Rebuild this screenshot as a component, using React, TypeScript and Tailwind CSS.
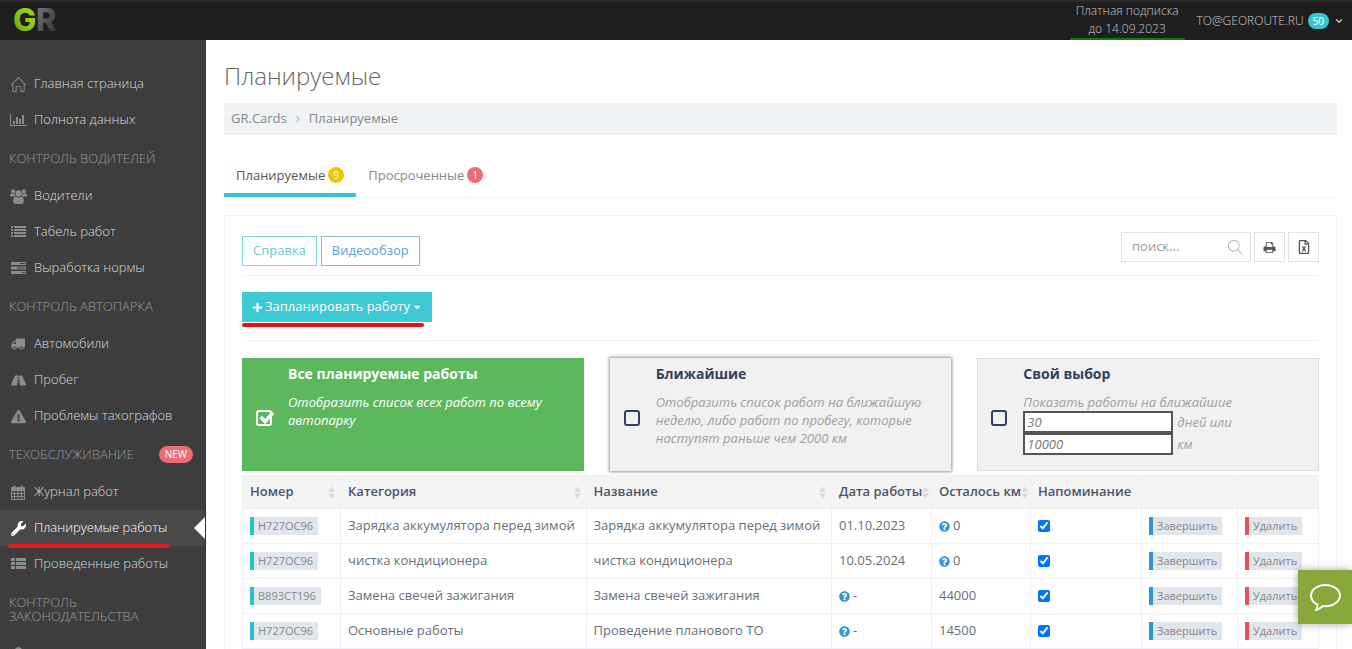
import type { ReactNode } from "react";
import {
  FaCaretDown,
  FaExclamationTriangle,
  FaPlus,
  FaQuestionCircle,
  FaRegFileExcel,
  FaRoad,
  FaTruck,
  FaUser,
  FaWrench,
} from "react-icons/fa";
import { FiChevronDown } from "react-icons/fi";
import { SlBubble, SlHome, SlMagnifier } from "react-icons/sl";

function BarChartIcon() {
  return (
    <svg viewBox="0 0 17 14" className="h-[14px] w-[17px] shrink-0" fill="currentColor">
      <path d="M0 1h1v11h16v1H0z" />
      <path d="M3 8h2v3H3zM6 4h2v7H6zM9 6h2v5H9zM12 2h2v9h-2z" />
    </svg>
  );
}

function UsersIcon() {
  return (
    <svg viewBox="0 0 16 14" className="h-[15px] w-[17px] shrink-0" fill="currentColor">
      <circle cx="3" cy="2.200" r="2" />
      <circle cx="13" cy="2.200" r="2" />
      <circle cx="8" cy="4" r="3" />
      <path d="M0 6.200C0 4.800.8 4.200 1.600 4.200c.9.6 1.900.6 2.800.1 0 1 .3 1.900.9 2.700H1.500C.6 7 0 6.800 0 6.200zM16 6.200c0-1.400-.8-2-1.600-2-.9.6-1.900.6-2.800.1 0 1-.3 1.900-.9 2.700h3.800c.9 0 1.500-.2 1.500-.8z" />
      <path d="M3 11.500C3 9 3.800 7 5.600 7c1.500 1.200 3.300 1.200 4.800 0C12.200 7 13 9 13 11.500c0 1.500-.9 2.500-2.300 2.500H5.300C3.900 14 3 13 3 11.500z" />
    </svg>
  );
}

function ListIcon() {
  return (
    <svg viewBox="0 0 15 12" className="h-[12px] w-[15px] shrink-0" fill="currentColor">
      <path d="M0 0h2v2H0zM3 0h12v2H3zM0 3h2v2H0zM3 3h12v2H3zM0 6h2v2H0zM3 6h12v2H3zM0 9h2v2H0zM3 9h12v2H3z" />
    </svg>
  );
}

function ThListIcon() {
  return (
    <svg viewBox="0 0 15 12" className="h-[12px] w-[15px] shrink-0" fill="currentColor">
      <path d="M0 0h4v3H0zM5 0h10v3H5zM0 4h4v3H0zM5 4h10v3H5zM0 8h4v3H0zM5 8h10v3H5z" />
    </svg>
  );
}

function TasksIcon() {
  return (
    <svg viewBox="0 0 15 14" className="h-[14px] w-[15px] shrink-0" fill="currentColor">
      <path
        fillRule="evenodd"
        d="M0 1h15v3H0zM9 2v1h5V2zM0 5.500h15v3H0zM6 6.500v1h8v-1zM0 10h15v3H0zM11 11v1h3v-1z"
      />
    </svg>
  );
}

function CalendarIcon() {
  return (
    <svg viewBox="0 0 14 15" className="h-[15px] w-[14px] shrink-0" fill="currentColor">
      <path
        fillRule="evenodd"
        d="M1 2h1.500V.5h2V2h5V.5h2V2H13a1 1 0 0 1 1 1v11a1 1 0 0 1-1 1H1a1 1 0 0 1-1-1V3a1 1 0 0 1 1-1zM1 6v2h2V6zM4 6v2h2.500V6zM7.500 6v2H10V6zM11 6v2h2V6zM1 9v2h2V9zM4 9v2h2.500V9zM7.500 9v2H10V9zM11 9v2h2V9zM1 12v2h2v-2zM4 12v2h2.500v-2zM7.500 12v2H10v-2zM11 12v2h2v-2z"
      />
    </svg>
  );
}

function PrintIcon() {
  return (
    <svg viewBox="0 0 14 14" className="h-[13px] w-[13px]" fill="currentColor">
      <path
        fillRule="evenodd"
        d="M3 1h6.500L11 2.500V6h1a1.500 1.500 0 0 1 1.500 1.500V11H11v2H3v-2H.5V7.500A1.500 1.500 0 0 1 2 6h1zM4 2v4.500h6V3.500H8.500V2zM4 9.500V12h6V9.500z"
      />
    </svg>
  );
}

function SortIcon() {
  return (
    <svg viewBox="0 0 8 14" className="h-[13px] w-[7px] shrink-0 text-[#d9d9d9]" fill="currentColor">
      <path d="M4 0l4 6H0zM4 14l4-6H0z" />
    </svg>
  );
}

function Logo() {
  return (
    <svg viewBox="0 0 46 38" className="h-[38px] w-[46px] overflow-visible" role="img" aria-label="GR">
      <defs>
        <linearGradient id="logo-g" x1="0" y1="1" x2="1" y2="0">
          <stop offset="0" stopColor="#5f9c0c" />
          <stop offset="0.5" stopColor="#8fc31a" />
          <stop offset="1" stopColor="#b5d334" />
        </linearGradient>
        <linearGradient id="logo-r" x1="0" y1="0" x2="1" y2="1">
          <stop offset="0" stopColor="#7d7d7d" />
          <stop offset="1" stopColor="#2c2c2c" />
        </linearGradient>
      </defs>
      <g fontFamily="Inter, sans-serif" fontWeight="800" fontSize="31">
        <text x="23" y="29" fill="url(#logo-r)">R</text>
        <text x="0" y="29" fill="url(#logo-g)">G</text>
      </g>
    </svg>
  );
}

function NavItem({ icon, label, active }: { icon: ReactNode; label?: string; active?: boolean }) {
  return (
    <a
      href="#"
      className={`relative flex h-[36px] items-center gap-[8px] pl-[10px] text-[13px] ${
        active ? "bg-[#494949] font-light text-white" : "font-light text-[#dcdcdc]"
      }`}
    >
      <span className={`flex w-[16px] justify-center text-[15px] ${active ? "text-white" : "text-[#8c8c8c]"}`}>
        {icon}
      </span>
      {label}
      {active && (
        <>
          <span className="absolute top-[7px] right-0 border-y-[11px] border-r-[11px] border-y-transparent border-r-white" />
          <span className="absolute -bottom-[2px] left-[8px] h-[4px] w-[162px] rounded-full bg-[#e31b1b]" />
        </>
      )}
    </a>
  );
}

function NavHeading({ children, badge }: { children: ReactNode; badge?: string }) {
  return (
    <h3 className="flex min-h-[40px] items-center justify-between py-[13px] pr-[12px] pl-[9px] text-[13px] leading-[14px] font-light text-[#999999] uppercase">
      <span>{children}</span>
      {badge && (
        <span className="-my-[2px] rounded-full bg-[#ed6b75] px-[6px] text-[10px] leading-[17px] font-normal text-white">
          {badge}
        </span>
      )}
    </h3>
  );
}

function Sidebar() {
  return (
    <nav className="w-[206px] shrink-0 overflow-hidden border-r border-[#333333] bg-[#3d3d3d] pt-[26px]">
      <NavItem icon={<SlHome />} label="Главная страница" />
      <NavItem icon={<BarChartIcon />} label="Полнота данных" />
      <NavHeading>Контроль водителей</NavHeading>
      <NavItem icon={<UsersIcon />} label="Водители" />
      <NavItem icon={<ListIcon />} label="Табель работ" />
      <NavItem icon={<TasksIcon />} label="Выработка нормы" />
      <NavHeading>Контроль автопарка</NavHeading>
      <NavItem icon={<FaTruck className="-scale-x-100 text-[14px]" />} label="Автомобили" />
      <NavItem icon={<FaRoad />} label="Пробег" />
      <NavItem icon={<FaExclamationTriangle />} label="Проблемы тахографов" />
      <NavHeading badge="NEW">Техобслуживание</NavHeading>
      <NavItem icon={<CalendarIcon />} label="Журнал работ" />
      <NavItem icon={<FaWrench />} label="Планируемые работы" active />
      <NavItem icon={<ThListIcon />} label="Проведенные работы" />
      <NavHeading>
        Контроль
        <br />
        законодательства
      </NavHeading>
      <NavItem icon={<FaUser />} />
    </nav>
  );
}

function Topbar() {
  return (
    <header className="flex h-[40px] shrink-0 items-start justify-between border-t-2 border-[#2b2b2b] bg-[#1f1f1f] pr-[8px] pl-[13px] text-[12px] text-[#c8c8c8]">
      <a href="#">
        <Logo />
      </a>
      <div className="flex h-full items-center gap-[12px]">
        <a
          href="#"
          className="flex h-full flex-col justify-end border-b-2 border-[#0a7d0a] px-[6px] text-center leading-[18px] font-light"
        >
          <span>Платная подписка</span>
          <span>до 14.09.2023</span>
        </a>
        <button type="button" className="flex items-center gap-[4px] font-light">
          TO@GEOROUTE.RU
          <span className="rounded-full bg-[#36c6d3] px-[5px] text-[10px] leading-[16px] font-normal text-white">50</span>
          <FiChevronDown className="ml-[1px] text-[10px]" strokeWidth={3} />
        </button>
      </div>
    </header>
  );
}

function FilterCard({ title, checked, className, children }: {
  title: string;
  checked?: boolean;
  className: string;
  children: ReactNode;
}) {
  return (
    <div className={`flex h-[113px] ${className}`}>
      <div className="relative mt-[52px] ml-[14px] h-[17px] w-[32px] shrink-0">
        <input
          type="checkbox"
          aria-label={title}
          defaultChecked={checked}
          className="block h-[16px] w-[16px] appearance-none rounded-[3px] border-2 border-current"
        />
        {checked && (
          <svg
            viewBox="0 0 20 18"
            className="pointer-events-none absolute top-0 left-0 h-[16px] w-[20px]"
            fill="none"
            stroke="currentColor"
            strokeWidth="4"
          >
            <path d="M4 8l5 5L18 3" />
          </svg>
        )}
      </div>
      <div className="min-w-0 flex-1 pt-[6px] pr-[30px]">
        <h4 className="text-[14px] leading-[20px] font-bold">{title}</h4>
        <div className="mt-[9px] text-[13px] leading-[18px] italic">{children}</div>
      </div>
    </div>
  );
}

function Tag({ className, children }: { className: string; children: ReactNode }) {
  return (
    <span
      className={`block w-fit border-l-4 bg-[#e1e5ec] pr-[5px] pl-[4px] text-[11px] leading-[18px] text-[#888888] ${className}`}
    >
      {children}
    </span>
  );
}

function Help({ children }: { children: ReactNode }) {
  return (
    <span className="flex items-center gap-[3px]">
      <FaQuestionCircle className="text-[11px] text-[#3598dc]" />
      {children}
    </span>
  );
}

const columns = [
  { title: "Номер", width: "w-[98px]", sortable: true },
  { title: "Категория", width: "", sortable: true },
  { title: "Название", width: "", sortable: true },
  { title: "Дата работы", width: "w-[100px]", sortable: true },
  { title: "Осталось км", width: "w-[99px]", sortable: true },
  { title: "Напоминание", width: "w-[111px]" },
  { title: "", width: "w-[96px]" },
  { title: "", width: "w-[81px]" },
];

const rows = [
  { number: "H727OC96", category: "Зарядка аккумулятора перед зимой", name: "Зарядка аккумулятора перед зимой", date: "01.10.2023", left: "" },
  { number: "H727OC96", category: "чистка кондиционера", name: "чистка кондиционера", date: "10.05.2024", left: "" },
  { number: "B893CT196", category: "Замена свечей зажигания", name: "Замена свечей зажигания", date: "", left: "44000" },
  { number: "H727OC96", category: "Основные работы", name: "Проведение планового ТО", date: "", left: "14500" },
];

function WorksTable() {
  return (
    <table className="mt-[4px] w-full table-fixed border-collapse text-left text-[13px] text-[#666f7b]">
      <thead>
        <tr className="h-[33px] bg-[#f4f4f4] text-[#4a5568]">
          {columns.map((col, i) => (
            <th key={i} className={`border border-[#edf1f5] p-0 pl-[7px] font-semibold whitespace-nowrap ${col.width}`}>
              <span className="flex items-center justify-between pr-[5px]">
                {col.title}
                {col.sortable && <SortIcon />}
              </span>
            </th>
          ))}
        </tr>
      </thead>
      <tbody>
        {rows.map((row, i) => (
          <tr key={i} className="h-[35px] *:border *:border-[#edf1f5] *:p-0 *:pl-[7px] *:whitespace-nowrap">
            <td><Tag className="border-[#26c2cf]">{row.number}</Tag></td>
            <td>{row.category}</td>
            <td>{row.name}</td>
            <td>{row.date || <Help>-</Help>}</td>
            <td>{row.left || <Help>0</Help>}</td>
            <td>
              <input type="checkbox" defaultChecked aria-label="Напоминание" className="block h-[12px] w-[12px]" />
            </td>
            <td>
              <button type="button" className="block"><Tag className="border-[#2a95dc]">Завершить</Tag></button>
            </td>
            <td>
              <button type="button" className="block"><Tag className="border-[#e7505a]">Удалить</Tag></button>
            </td>
          </tr>
        ))}
      </tbody>
    </table>
  );
}

export default function App() {
  return (
    <div className="flex h-screen flex-col overflow-hidden bg-white font-['Open_Sans',sans-serif]">
      <Topbar />
      <div className="flex min-h-0 flex-1">
        <Sidebar />
        <main className="flex min-w-0 flex-1 flex-col overflow-hidden pr-[15px] pl-[18px]">
          <h1 className="pt-[20px] text-[24px] leading-[32px] font-light text-[#666666]">Планируемые</h1>
          <div className="mt-[11px] flex h-[32px] shrink-0 items-center gap-[6px] bg-[#eff3f6] px-[7px] text-[13px] text-[#888888]">
            <a href="#">GR.Cards</a>
            <FiChevronDown className="-rotate-90 text-[10px]" />
            <span>Планируемые</span>
          </div>

          {/* Tabs */}
          <div className="mt-[21px] flex h-[42px] shrink-0 border-b border-[#f3f5f7] text-[13px]">
            <a href="#" className="flex items-center gap-[3px] border-b-4 border-[#32c5d2] px-[12px] pt-[2px] text-[#555555]">
              Планируемые
              <span className="mb-[2px] h-[16px] w-[16px] rounded-full bg-[#f1c40f] text-center text-[10px] leading-[16px] text-white">9</span>
            </a>
            <a href="#" className="flex items-center gap-[3px] border-b-4 border-transparent px-[12px] pt-[2px] text-[#888888]">
              Просроченные
              <span className="mb-[2px] h-[16px] w-[16px] rounded-full bg-[#ed6b75] text-center text-[10px] leading-[16px] text-white">1</span>
            </a>
          </div>

          <section className="mt-[17px] flex-1 border border-b-0 border-[#f0f4f8] px-[17px] pt-[16px]">
            {/* Toolbar */}
            <div className="flex justify-between border-b border-[#eef3f6] pb-[9px]">
              <div className="mt-[4px] flex gap-[4px] text-[13px]">
                <a href="#" className="flex h-[30px] items-center border border-[#7ed6de] px-[10px] text-[#6cc9d2]">Справка</a>
                <a href="#" className="flex h-[30px] items-center border border-[#88bbe8] px-[10px] text-[#5f9fe0]">Видеообзор</a>
              </div>
              <div className="flex h-[30px] gap-[3px] text-[#555555]">
                <label className="flex w-[130px] items-center border border-[#dfe4ec] pr-[7px] pl-[10px]">
                  <input
                    type="text"
                    placeholder="поиск..."
                    aria-label="поиск"
                    className="w-full min-w-0 text-[13px] outline-none placeholder:text-[#999999]"
                  />
                  <SlMagnifier className="shrink-0 text-[15px] text-[#b5b5b5]" />
                </label>
                <button type="button" aria-label="Печать" className="flex w-[31px] items-center justify-center border border-[#e1e1e1]">
                  <PrintIcon />
                </button>
                <button type="button" aria-label="Excel" className="flex w-[31px] items-center justify-center border border-[#e1e1e1]">
                  <FaRegFileExcel className="text-[14px]" />
                </button>
              </div>
            </div>

            <div className="flex border-b border-[#eef3f6] pt-[16px] pb-[18px]">
              <button type="button" className="relative flex h-[30px] items-center gap-[2px] bg-[#3fc9d5] px-[10px] text-[13px] text-white">
                <FaPlus className="text-[11px]" />
                Запланировать работу
                <FaCaretDown className="text-[10px]" />
                <span className="absolute -bottom-[5px] left-0 h-[4px] w-[182px] rounded-full bg-[#e60f16]" />
              </button>
            </div>

            {/* Filters */}
            <div className="mt-[17px] grid grid-cols-3 gap-[26px]">
              <FilterCard title="Все планируемые работы" checked className="bg-[#5cb85c] text-white">
                <p>Отобразить список всех работ по всему автопарку</p>
              </FilterCard>
              <FilterCard title="Ближайшие" className="bg-[#f1f1f1] text-[#33405a] shadow-[0_0_3px_1px_#999999]">
                <p className="text-[#a0a0a0]">
                  Отобразить список работ на ближайшую неделю, либо работ по пробегу, которые наступят раньше чем 2000 км
                </p>
              </FilterCard>
              <FilterCard title="Свой выбор" className="bg-[#f1f1f1] text-[#33405a] outline outline-[#dedede] -outline-offset-1">
                <div className="text-[#a0a0a0]">
                  <p>Показать работы на ближайшие</p>
                  <label className="flex items-center gap-[4px]">
                    <input type="text" defaultValue="30" className="h-[22px] w-[150px] border-2 border-[#555555] bg-white px-[2px] text-[#777777]" />
                    дней или
                  </label>
                  <label className="flex items-center gap-[4px]">
                    <input type="text" defaultValue="10000" className="h-[22px] w-[150px] border-2 border-[#555555] bg-white px-[2px] text-[#777777]" />
                    км
                  </label>
                </div>
              </FilterCard>
            </div>

            <WorksTable />
          </section>
        </main>
      </div>

      <button
        type="button"
        aria-label="Чат"
        className="fixed right-0 bottom-[25px] flex h-[54px] w-[54px] items-center justify-center bg-[#88a83b] text-[31px] text-white shadow-[0_0_8px_rgba(0,0,0,0.35)]"
      >
        <SlBubble />
      </button>
    </div>
  );
}
